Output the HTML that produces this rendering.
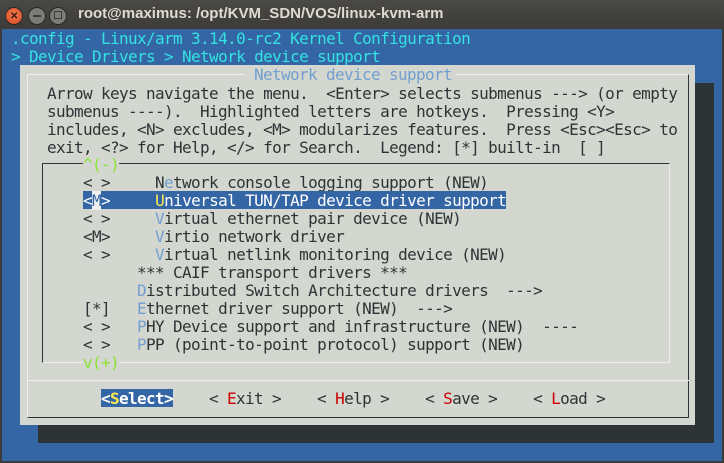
<!DOCTYPE html>
<html><head><meta charset="utf-8"><style>
*{margin:0;padding:0;box-sizing:border-box}
body{width:724px;height:463px;overflow:hidden;background:#3c3b37;position:relative;font-family:"DejaVu Sans Mono","Liberation Mono",monospace;font-size:16px;letter-spacing:-0.63px}
.tb{position:absolute;left:0;top:0;width:724px;height:29px;background:linear-gradient(#4a4945,#3c3b37)}
.tb .t{position:absolute;left:78px;top:5px;color:#dfdbd2;font:bold 15px "Liberation Sans",sans-serif;letter-spacing:0}
.c{position:absolute;top:7px;width:18px;height:18px;border-radius:50%}
.term{position:absolute;left:2px;top:29px;width:720px;height:432px;background:#3465a4}
.l{position:absolute;height:18px;line-height:20px;white-space:pre;color:#2e3436}
.cy{color:#34e2e2}
.hb{color:#729fcf}
.r{color:#cc0000}
.g{color:#8ae234}
</style></head><body>
<div class="tb">
<div class="c" style="left:5px;background:radial-gradient(circle at 50% 40%,#f37b4f,#d2481e);border:1px solid #2a2a28"></div>
<div class="c" style="left:28px;background:#7c7b76;border:1px solid #2a2a28"></div>
<div class="c" style="left:49px;background:#7c7b76;border:1px solid #2a2a28"></div>
<div style="position:absolute;left:10px;top:11px;color:#3a1a10;font:bold 10px 'Liberation Sans'">✕</div>
<div style="position:absolute;left:33px;top:15px;width:8px;height:2px;background:#3c3b37"></div>
<div style="position:absolute;left:54px;top:11px;width:8px;height:8px;border:1px solid #3c3b37"></div>
<div class="t">root@maximus: /opt/KVM_SDN/VOS/linux-kvm-arm</div>
</div>
<div class="term"></div>
<div class="l cy" style="left:11px;top:29px">.config - Linux/arm 3.14.0-rc2 Kernel Configuration</div>
<div class="l cy" style="left:11px;top:47px">&gt; Device Drivers &gt; Network device support</div>
<div style="position:absolute;left:38px;top:83px;width:676px;height:360px;background:#2e3436"></div>
<div style="position:absolute;left:20px;top:65px;width:675px;height:360px;background:#d3d7cf"></div>
<div style="position:absolute;left:27px;top:74px;width:662px;height:344px;border:1px solid #eeeeec;border-right-color:#2e3436;border-bottom-color:#2e3436"></div>
<div style="position:absolute;left:27px;top:380px;width:662px;height:1px;background:#eeeeec"></div>
<div class="l hb" style="left:245px;top:65px;background:#d3d7cf;padding:0 4px 0 9px">Network device support</div>
<div class="l" style="left:47px;top:83px;line-height:18px;padding-top:2px">Arrow keys navigate the menu.  &lt;Enter&gt; selects submenus ---&gt; (or empty
submenus ----).  Highlighted letters are hotkeys.  Pressing &lt;Y&gt;
includes, &lt;N&gt; excludes, &lt;M&gt; modularizes features.  Press &lt;Esc&gt;&lt;Esc&gt; to
exit, &lt;?&gt; for Help, &lt;/&gt; for Search.  Legend: [*] built-in  [ ]</div>
<div style="position:absolute;left:42px;top:163px;width:628px;height:200px;border:1px solid #2e3436;border-right-color:#eeeeec;border-bottom-color:#eeeeec"></div>
<div class="l g" style="left:83px;top:155px;background:#d3d7cf">^(-)</div>
<div class="l g" style="left:83px;top:353px;background:#d3d7cf">v(+)</div>
<div class="l" style="left:83px;top:173px">&lt; &gt;     N<span class="hb">e</span>twork console logging support (NEW)</div>
<div class="l" style="left:83px;top:191px;background:#3465a4;color:#fff">&lt;<span style="background:#eeeeec;color:#3465a4">M</span>&gt;     <span style="color:#fce94f">U</span>niversal TUN/TAP device driver support</div>
<div class="l" style="left:83px;top:209px">&lt; &gt;     <span class="hb">V</span>irtual ethernet pair device (NEW)</div>
<div class="l" style="left:83px;top:227px">&lt;M&gt;     <span class="hb">V</span>irtio network driver</div>
<div class="l" style="left:83px;top:245px">&lt; &gt;     <span class="hb">V</span>irtual netlink monitoring device (NEW)</div>
<div class="l" style="left:83px;top:263px">      *** CAIF transport drivers ***</div>
<div class="l" style="left:83px;top:281px">      <span class="hb">D</span>istributed Switch Architecture drivers  ---&gt;</div>
<div class="l" style="left:83px;top:299px">[*]   <span class="hb">E</span>thernet driver support (NEW)  ---&gt;</div>
<div class="l" style="left:83px;top:317px">&lt; &gt;   <span class="hb">P</span>HY Device support and infrastructure (NEW)  ----</div>
<div class="l" style="left:83px;top:335px">&lt; &gt;   <span class="hb">P</span>PP (point-to-point protocol) support (NEW)</div>
<div class="l" style="left:101px;top:389px;background:#3465a4;color:#fff;font-weight:bold">&lt;<span style="color:#fce94f">S</span>elect&gt;</div>
<div class="l" style="left:209px;top:389px">&lt; <span class="r">E</span>xit &gt;    &lt; <span class="r">H</span>elp &gt;    &lt; <span class="r">S</span>ave &gt;    &lt; <span class="r">L</span>oad &gt;</div>
</body></html>
